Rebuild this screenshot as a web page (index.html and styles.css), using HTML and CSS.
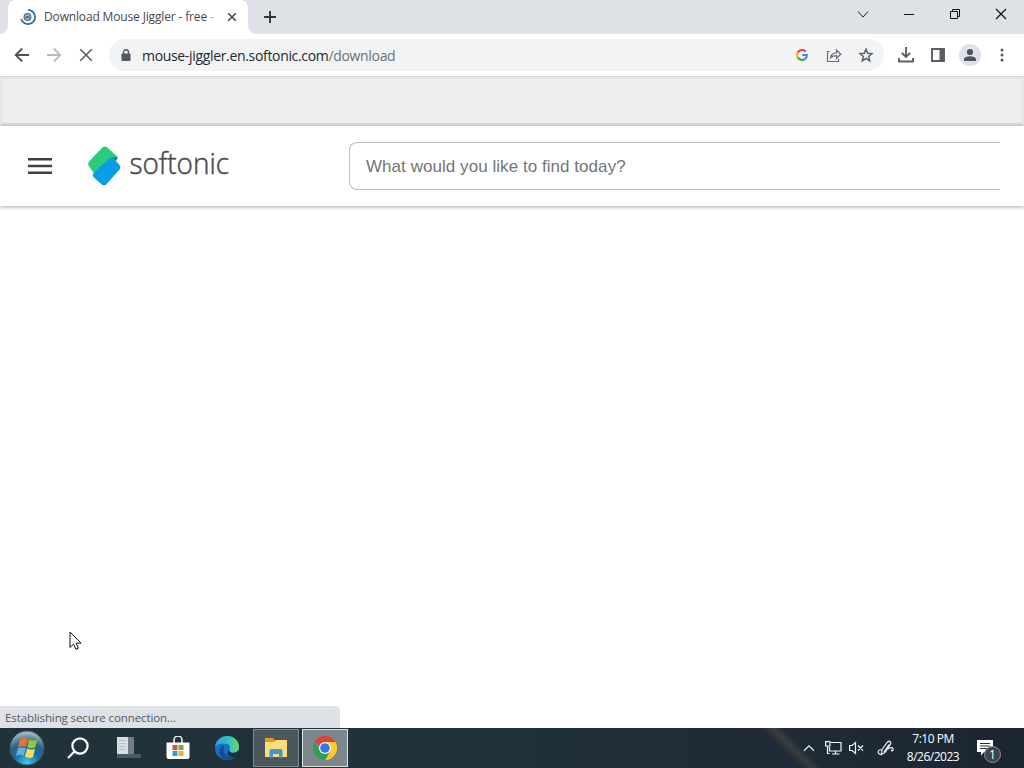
FILE: index.html
```html
<!DOCTYPE html>
<html lang="en">
<head>
    <meta charset="UTF-8">
    <meta name="viewport" content="width=device-width, initial-scale=1.0">
    <title>Download Mouse Jiggler - free</title>
    <link rel="stylesheet" href="styles.css">
</head>
<body>
    <!-- Tab strip -->
    <div class="tabstrip">
        <div class="tab">
            <svg class="favicon" width="16" height="16" viewBox="0 0 16 16" fill="none">
                <circle cx="7.500" cy="8" r="4" fill="#5b7288"/>
                <path d="M5 7.500c1-2 4-2 5 0M5.500 9.500c1.500 1 3 .8 4-.5" stroke="#dfe6ee" stroke-width="1"/>
                <path d="M8 .9A7.100 7.100 0 1 1 1.200 10" stroke="#2d6fb5" stroke-width="1.800"/>
            </svg>
            <span class="tab-title">Download Mouse Jiggler - free <i>-</i></span>
            <svg class="tab-close" width="10" height="10" viewBox="0 0 10 10"><path d="M1.200 1.200l7.600 7.600M8.800 1.200L1.200 8.800" stroke="#45494d" stroke-width="1.600"/></svg>
        </div>
        <svg class="new-tab" width="14" height="14" viewBox="0 0 14 14"><path d="M7 1v12M1 7h12" stroke="#33363a" stroke-width="1.900"/></svg>
        <div class="window-buttons">
            <svg width="46" height="28" viewBox="0 0 46 28" fill="none" stroke="#222"><path d="M18 11.500l5 5.500 5-5.500"/></svg>
            <svg width="46" height="28" viewBox="0 0 46 28" fill="none" stroke="#111"><path d="M18 14.500h10"/></svg>
            <svg width="46" height="28" viewBox="0 0 46 28" fill="none" stroke="#111"><path d="M18.500 11.500h7v7h-7zM20.500 11.500v-2h7v7h-2"/></svg>
            <svg width="46" height="28" viewBox="0 0 46 28" fill="none" stroke="#111"><path d="M18 9l10 10M28 9L18 19" stroke-width="1.200"/></svg>
        </div>
    </div>

    <!-- Toolbar -->
    <div class="toolbar">
        <svg class="nav" width="16" height="16" viewBox="0 0 16 16" fill="none" stroke="#4e5256" stroke-width="1.800"><path d="M15 8H2M8.200 1.500L1.700 8l6.500 6.500"/></svg>
        <svg class="nav" width="16" height="16" viewBox="0 0 16 16" fill="none" stroke="#b9bbbe" stroke-width="1.800"><path d="M1 8h13M7.800 1.500L14.300 8l-6.500 6.500"/></svg>
        <svg class="nav" width="16" height="16" viewBox="0 0 16 16" fill="none" stroke="#5a5e62" stroke-width="1.600"><path d="M2.200 2.200l11.600 11.600M13.800 2.200L2.200 13.800"/></svg>
        <div class="omnibox">
            <svg class="lock" width="10" height="13" viewBox="0 0 10 13"><path d="M2.500 5.500V3.300a2.500 2.500 0 0 1 5 0v2.200" fill="none" stroke="#55595d" stroke-width="1.400"/><rect x=".5" y="4.600" width="9" height="7.400" rx="1" fill="#55595d"/></svg>
            <span class="url">mouse-jiggler.en.softonic.com<em>/download</em></span>
            <svg class="google" width="12" height="12" viewBox="0 0 12 12" fill="none" stroke-width="2">
                <path d="M9.700 2.500A5 5 0 0 0 1.600 3.700" stroke="#ea4335"/>
                <path d="M1.600 3.700a5 5 0 0 0 0 4.600" stroke="#fbbc05"/>
                <path d="M1.600 8.300a5 5 0 0 0 7.400 1.600" stroke="#34a853"/>
                <path d="M9 9.900A4.800 4.800 0 0 0 10.900 6H6.200" stroke="#4285f4"/>
            </svg>
            <svg width="16" height="16" viewBox="0 0 16 16" fill="none" stroke="#6b6f73" stroke-width="1.200"><path d="M3.500 4.500h-2v10h11V12"/><path d="M4.500 10.800C5 7.500 7 6 10.500 5.900V3l4.300 4.300-4.300 4V8.700c-2.500 0-4.400.6-6 2.100z"/></svg>
            <svg width="16" height="16" viewBox="0 0 16 16" fill="none" stroke="#5f6368" stroke-width="1.500"><path d="M8 2.200l1.700 4 4.300.4-3.300 2.900 1 4.300L8 11.500l-3.700 2.300 1-4.300L2 6.600l4.300-.4z"/></svg>
        </div>
        <svg class="tool" width="16" height="16" viewBox="0 0 16 16" fill="none" stroke="#5a5e62" stroke-width="1.900"><path d="M8 0v9.500M3.800 5.800L8 10l4.200-4.200M1 11v3.500h14V11"/></svg>
        <svg class="tool" width="16" height="16" viewBox="0 0 16 16"><path d="M2 2h12v12H2z" fill="none" stroke="#5a5e62" stroke-width="1.900"/><path d="M9.500 2H14v12H9.500z" fill="#5a5e62"/></svg>
        <svg class="avatar" width="22" height="22" viewBox="0 0 22 22"><circle cx="11" cy="11" r="11" fill="#dde1ea"/><circle cx="11" cy="8" r="3.100" fill="#4d5660"/><path d="M5 17v-1.700c0-2 3.500-3 6-3s6 1 6 3V17z" fill="#4d5660"/></svg>
        <svg class="more" width="4" height="14" viewBox="0 0 4 14" fill="#55595d"><circle cx="2" cy="2" r="1.500"/><circle cx="2" cy="7" r="1.500"/><circle cx="2" cy="12" r="1.500"/></svg>
    </div>

    <!-- Page -->
    <div class="page">
        <div class="ad-slot"></div>
        <header class="site-header">
            <svg class="menu" width="24" height="18" viewBox="0 0 24 18"><path d="M0 2.200h24M0 9h24M0 15.800h24" stroke="#404040" stroke-width="2.400"/></svg>
            <svg class="logo" width="144" height="42" viewBox="0 0 144 42">
                <path d="M14.500 2.300q2-1.700 4.500 0l10 9q1.200 1.200.3 2.700L6 28.500.8 21q-1.500-2.500.5-4.800z" fill="#2bcb7b"/>
                <path d="M29.700 12.500l-1.700 3.500-5-3.500z" fill="#15806f"/>
                <path d="M20.500 14q3-2.500 6 .3l5.200 6q1.500 2 0 4L18.500 39.300q-2.500 2-5 0L5.300 32q-1.300-1.500 0-3.500z" fill="#0a9ce5"/>
                <text x="41.500" y="28.500" textLength="99.500" lengthAdjust="spacingAndGlyphs">softonic</text>
            </svg>
            <div class="search">What would you like to find today?</div>
        </header>
        <div class="content">
            <svg class="cursor" width="13" height="20" viewBox="0 0 13 20"><path d="M1 1v15.500l3.600-3.400 2.300 5.200 2.500-1.100-2.300-5.100H12z" fill="#fff" stroke="#111" stroke-width="1"/></svg>
        </div>
        <div class="status">Establishing secure connection...</div>
    </div>

    <!-- Taskbar -->
    <div class="taskbar">
        <div class="task start">
            <svg width="36" height="36" viewBox="0 0 36 36">
                <defs>
                    <radialGradient id="orb" cx=".5" cy=".95" r=".95"><stop offset="0" stop-color="#3fd0f2"/><stop offset=".4" stop-color="#1b6a9d"/><stop offset=".65" stop-color="#2f6380"/><stop offset="1" stop-color="#b4c6cc"/></radialGradient>
                </defs>
                <circle cx="18" cy="18" r="17" fill="url(#orb)" stroke="#355769"/>
                <path d="M11 9.500q4-2.500 8-.5l-2 8q-4-1.500-8 .5z" fill="#e8703a"/>
                <path d="M20 9.500q4 2 8.500 0l-2.300 8q-4 1.500-8 0z" fill="#93c83e"/>
                <path d="M8.800 18.500q4-2 8-.3l-2 7.500q-4-2-8 .2z" fill="#5ab4e8"/>
                <path d="M18 18.500q4 2 8 .2L24 27q-4 2-8-.5z" fill="#fbd95a"/>
            </svg>
        </div>
        <div class="task search-button">
            <svg width="24" height="24" viewBox="0 0 24 24" fill="none" stroke="#fff" stroke-width="2.200"><circle cx="14" cy="10" r="7.600"/><path d="M8.600 15.400L2 22"/></svg>
        </div>
        <div class="task">
            <svg width="26" height="24" viewBox="0 0 26 24">
                <path d="M2 1h11v17H2z" fill="#d9dde6"/><path d="M13 1h6v17h-6z" fill="#727d87"/>
                <path d="M4 4.500h7M4 7.500h7M4 10.500h7M4 13.500h7" stroke="#b9c0c8"/>
                <path d="M2 18h24v4H2z" fill="#4d5b66"/>
            </svg>
        </div>
        <div class="task">
            <svg width="24" height="24" viewBox="0 0 24 24">
                <path d="M8 7V4a4 4 0 0 1 8 0v3" fill="none" stroke="#fff" stroke-width="1.500"/>
                <path d="M.5 6.500h23V21q0 2-2 2h-19q-2 0-2-2z" fill="#fff"/>
                <path d="M6.500 9h5v5h-5z" fill="#e0532f"/><path d="M12.500 9h5v5h-5z" fill="#7aae26"/><path d="M6.500 15h5v5h-5z" fill="#2b9fd8"/><path d="M12.500 15h5v5h-5z" fill="#efb12a"/>
            </svg>
        </div>
        <div class="task">
            <svg width="26" height="26" viewBox="0 0 26 26">
                <defs>
                    <linearGradient id="edge"><stop offset="0" stop-color="#249fd8"/><stop offset=".6" stop-color="#35c3c5"/><stop offset="1" stop-color="#6bd85c"/></linearGradient>
                </defs>
                <circle cx="13" cy="13" r="12" fill="#1670c4"/>
                <path d="M1 12C2 5 7 1 13 1c7 0 12 5 12 10.500 0 4-3 6-6 6-3.500 0-4.500-1.500-3.500-3 1.500-3-1-6-5-6C6 8.500 2 10 1 12z" fill="url(#edge)"/>
                <path d="M10 10c-2 6 1 12 8 12 3 0 4.500-1 5.500-2-2 3-6 5-10 5C7 25 5 20 5.500 16c.4-3 2-5 4.500-6z" fill="#124c96"/>
                <path d="M15.500 14.500c-1 2 1 3.500 4 3.500 2 0 4-1 5-2.500L24.500 20c-2 1.500-4 2-6 2-4.500 0-7-4-3-7.500z" fill="#202e38"/>
            </svg>
        </div>
        <div class="task open">
            <svg width="24" height="22" viewBox="0 0 24 22">
                <path d="M1 1h8l2 2.500h12V8H1z" fill="#e39a25"/><path d="M1 5h9l2-2h11v17H1z" fill="#fbdc7b"/>
                <path d="M5.500 21v-7q0-2 2-2h9q2 0 2 2v7h-3.500v-4H9v4z" fill="#4594cc"/>
            </svg>
        </div>
        <div class="task active">
            <svg width="24" height="24" viewBox="0 0 24 24">
                <path d="M12 12L1.600 6A12 12 0 0 1 22.400 6z" fill="#e34133"/>
                <path d="M12 6h10.400A12 12 0 0 1 12 24l5.200-9z" fill="#fccb2e"/>
                <path d="M1.600 6l5.200 9L12 18l5.200-3L12 24A12 12 0 0 1 1.600 6z" fill="#2da24e"/>
                <circle cx="12" cy="12" r="6" fill="#fff"/><circle cx="12" cy="12" r="4.800" fill="#3579e8"/>
            </svg>
        </div>
        <div class="tray">
            <svg width="12" height="8" viewBox="0 0 12 8" fill="none" stroke="#e8ecee" stroke-width="1.300"><path d="M1 6.800l5-5 5 5"/></svg>
            <svg class="network" width="17" height="14" viewBox="0 0 17 14" fill="none" stroke="#f2f4f5" stroke-width="1.200"><path d="M6 1.500h10v8.500H4.500V6M10.500 10v3M7 13h7.500M.6.600h4.400v4.400H.6zM2.500 5v7.500h2"/></svg>
            <svg class="sound" width="15" height="14" viewBox="0 0 15 14" fill="none" stroke="#f2f4f5" stroke-width="1.200"><path d="M.6 4.500h2.500L6.500 1.500v11L3.100 9.500H.6zM9 4.500l5 5M14 4.500l-5 5"/></svg>
            <svg class="pen" width="18" height="17" viewBox="0 0 18 17" fill="none" stroke="#e8ecee" stroke-width="1.200"><path d="M5 9.500L10.500 2q1.500-1.500 3 0 .8 1-.3 2.600L8 12.500l-3.500 2z M7 12l5-7.500M5 9.500c-5 0-5.500 5 0 5M11 9c2-2 6-2 5 1-.5 1.500-2 1-1.500-.5"/></svg>
            <div class="clock"><span>7:10 PM</span><span>8/26/2023</span></div>
            <div class="notices">
                <svg width="16" height="16" viewBox="0 0 16 16"><path d="M0 0h16v12H7l-3 3.500V12H0z" fill="#fff"/><path d="M3 3.500h10M3 6h10M3 8.500h7" stroke="#22303b" stroke-width="1.100"/></svg>
                <span class="badge">1</span>
            </div>
        </div>
    </div>
</body>
</html>
```
FILE: styles.css
```css
* { box-sizing: border-box; }
body { margin: 0; width: 1024px; height: 768px; display: flex; flex-direction: column; overflow: hidden; background: #fff; font-family: "Open Sans", "Noto Sans", sans-serif; font-size: 12px; }
svg { display: block; flex: none; }

/* Tab strip */
.tabstrip { height: 34px; background: #dee1e6; display: flex; padding-left: 8px; }
.tab { position: relative; width: 240px; height: 34px; background: #fff; border-radius: 8px 8px 0 0; display: flex; align-items: center; padding: 0 11px 0 12px; }
/* Curved feet of the active tab */
.tab::before, .tab::after { content: ""; position: absolute; bottom: 0; width: 8px; height: 8px; }
.tab::before { left: -8px; background: radial-gradient(circle at 0 0, transparent 7.5px, #fff 8px); }
.tab::after { right: -8px; background: radial-gradient(circle at 100% 0, transparent 7.5px, #fff 8px); }
.tab-title { flex: 1; margin-left: 8px; padding-bottom: 1px; font-size: 12px; letter-spacing: -0.15px; color: #45494d; white-space: nowrap; }
.tab-title i { font-style: normal; color: #aaa; }
.new-tab { margin: 10px 0 0 15px; }
.window-buttons { margin-left: auto; display: flex; }

/* Toolbar */
.toolbar { height: 43px; border-bottom: 1px solid #d5d7d8; display: flex; align-items: center; padding: 0 19px 0 14px; background: #fff; }
.nav { margin-right: 16px; }
.omnibox { width: 775px; height: 32px; margin-left: -1px; border-radius: 16px; background: #f1f3f4; display: flex; align-items: center; padding: 0 10px 0 12px; }
.url { margin-left: 11px; flex: 1; font-size: 14px; letter-spacing: -0.33px; color: #27292c; }
.url em { font-style: normal; color: #6d7175; }
.google { margin-right: 2px; }
.omnibox svg + svg { margin-left: 16px; }
.tool { margin-left: 16px; }
.omnibox + .tool { margin-left: 14px; }
.avatar { margin-left: 13px; }
.more { margin-left: 19px; }

/* Page */
.page { flex: 1; display: flex; flex-direction: column; position: relative; }
.ad-slot { height: 49px; background: #eee; border: 2px solid #e6e6e6; border-bottom: 3px solid #dcdcdc; }
.site-header { height: 80px; display: flex; align-items: center; padding: 0 24px 0 28px; box-shadow: 0 1px 4px rgba(0, 0, 0, 0.35); }
.logo { margin-left: 36px; overflow: visible; }
.logo text { font-family: "Open Sans", sans-serif; font-size: 30px; font-weight: 300; fill: #4a4a4a; stroke: #4a4a4a; stroke-width: 0.5px; }
.search { flex: 1; height: 48px; margin-left: 117px; border: 1px solid #bdbdbd; border-right: 0; border-radius: 8px 0 0 8px; padding-left: 16px; line-height: 47px; font-family: "Liberation Sans", Arial, sans-serif; font-size: 17px; letter-spacing: 0.05px; color: #757575; }
.content { flex: 1; position: relative; }
.cursor { position: absolute; left: 69px; top: 425px; }
.status { position: absolute; left: 0; bottom: 0; width: 340px; height: 22px; background: #dee1e6; border-radius: 0 5px 0 0; padding-left: 5px; line-height: 23px; font-size: 11.5px; letter-spacing: -0.1px; color: #54585c; }

/* Taskbar */
.taskbar { height: 40px; background: linear-gradient(90deg, #21333a, #20303a 50%, #1c2632); display: flex; align-items: center; }
.task { width: 46px; height: 38px; margin-right: 3px; display: flex; align-items: center; justify-content: center; }
.start { width: 54px; margin-right: 0; }
.search-button { width: 47px; margin-right: 2px; }
.search-button + .task { width: 49px; }
.open { background: #4a585e; border: 1px solid #7f898d; }
.active { background: #7d868b; border: 1px solid #e0e3e4; }
.tray { flex: 1; height: 40px; display: flex; align-items: center; justify-content: flex-end; padding-right: 22px; background: linear-gradient(45deg, transparent 318px, rgba(92, 78, 70, 0.5) 326px, transparent 334px); }
.network { margin-left: 10px; }
.sound { margin-left: 7px; }
.pen { margin-left: 13px; }
.clock { width: 54px; margin-left: 11px; display: flex; flex-direction: column; align-items: center; line-height: 18px; font-size: 12px; letter-spacing: -0.5px; color: #fff; white-space: nowrap; }
.notices { position: relative; margin-left: 17px; width: 25px; }
.badge { position: absolute; left: 7px; top: 6px; width: 17px; height: 17px; border: 1px solid #8a9095; border-radius: 50%; background: #3d454d; color: #fff; font-size: 12px; line-height: 15px; text-align: center; }
```
